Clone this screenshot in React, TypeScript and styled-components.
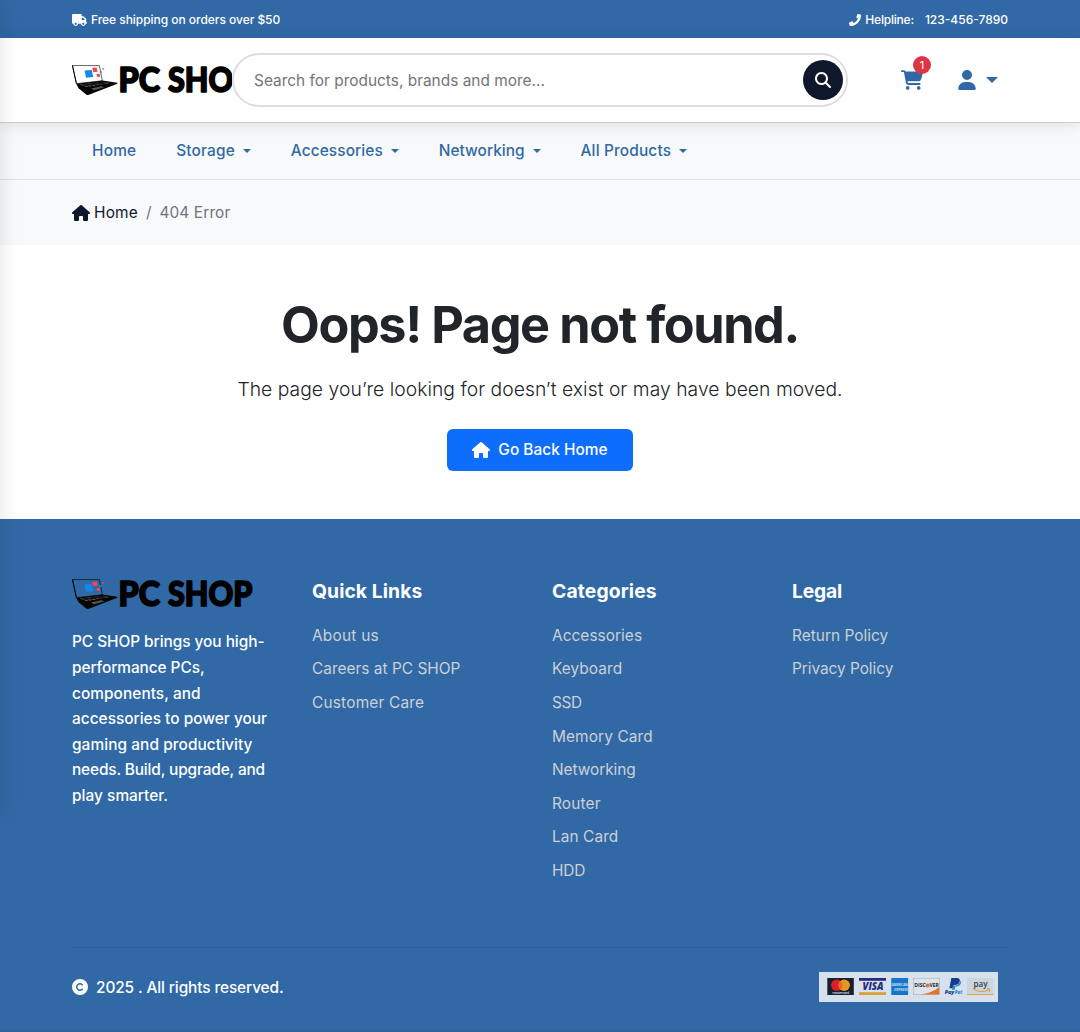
import React from 'react';
import styled, { createGlobalStyle } from 'styled-components';
import { FaTruck, FaHouse, FaCartShopping, FaUser, FaMagnifyingGlass, FaCopyright } from 'react-icons/fa6';
import { FaPhone } from 'react-icons/fa';

const blue = '#3069a5';

const GlobalStyle = createGlobalStyle`
  *, *::before, *::after { box-sizing: border-box; }
  body { margin: 0; background: #fff; color: #212529; font: 400 15.4px/1.6 Inter, 'Liberation Sans', sans-serif; overflow: hidden; }
  h1, h3, p, ul { margin: 0; padding: 0; font-weight: inherit; }
  ul { list-style: none; }
  a { color: inherit; text-decoration: none; }
  svg { display: block; flex: none; }
`;

const Page = styled.div`
  position: relative;
  min-height: 1032px;
  display: flex;
  flex-direction: column;
  overflow: hidden;
`;

const DrawerShade = styled.div`
  position: absolute;
  z-index: 5;
  left: -20px;
  top: 0;
  width: 20px;
  height: 812px;
  box-shadow: 0 0 20px rgba(0, 0, 0, 0.12);
  pointer-events: none;
`;

const BottomShade = styled.div`
  position: absolute;
  z-index: 5;
  left: 0;
  right: 0;
  bottom: -10px;
  height: 10px;
  box-shadow: 0 0 5px rgba(0, 0, 0, 0.15);
`;

const Container = styled.div`
  width: 936px;
  margin: 0 auto;
  display: flex;
  align-items: center;
`;

const Label = styled.span<{ $track?: number }>`
  letter-spacing: ${p => p.$track ?? 0}px;
  white-space: nowrap;
`;

const TopBar = styled.div`
  height: 38px;
  display: flex;
  background: ${blue};
  color: #fff;
  font-size: 12px;
  font-weight: 450;
  padding-top: 1px;
`;

const TopItem = styled.div<{ $gap: number; $push?: boolean }>`
  display: flex;
  align-items: center;
  gap: ${p => p.$gap}px;
  margin-left: ${p => (p.$push ? 'auto' : '0')};
`;

const HelpNumber = styled(Label)`
  margin-left: 7px;
`;

const Header = styled.header`
  position: relative;
  z-index: 2;
  height: 85px;
  display: flex;
  background: #fff;
  border-bottom: 1px solid #c9cdd8;
  box-shadow: 0 2px 15px rgba(0, 0, 0, 0.1);
`;

const LogoFrame = styled.div<{ $width: number; $clip?: boolean }>`
  width: ${p => p.$width}px;
  height: 30px;
  overflow-x: ${p => (p.$clip ? 'clip' : 'visible')};
  overflow-y: visible;
`;

const LogoDrawing = styled.svg`
  overflow: visible;
`;

const SearchBox = styled.form`
  width: 616px;
  height: 54px;
  border: 2px solid #dedede;
  border-radius: 27px;
  display: flex;
  align-items: center;
  justify-content: space-between;
  padding: 0 3px 0 20px;
  color: #757575;
  background: #fff;
`;

const SearchText = styled(Label)`
  padding-top: 2px;
`;

const SearchButton = styled.button`
  width: 40px;
  height: 40px;
  border: 0;
  border-radius: 50%;
  padding: 0;
  display: grid;
  place-items: center;
  background: #0f172a;
  color: #fff;
`;

const Actions = styled.div`
  display: flex;
  align-items: center;
  margin-left: 53px;
  margin-top: -1px;
  color: ${blue};
`;

const Cart = styled.div`
  position: relative;
  margin-right: 34px;
`;

const Badge = styled.span`
  position: absolute;
  left: 12px;
  top: -13px;
  width: 18px;
  height: 18px;
  border-radius: 50%;
  background: #dc3545;
  color: #fff;
  font-size: 11px;
  line-height: 18px;
  text-align: center;
`;

const Caret = styled.i<{ $size: number; $gap: number }>`
  margin-left: ${p => p.$gap}px;
  border: ${p => p.$size}px solid transparent;
  border-top-color: currentColor;
  border-bottom: 0;
`;

const Nav = styled.nav`
  height: 57px;
  display: flex;
  background: #f8f9fb;
  border-bottom: 1px solid #dee2e6;
  color: ${blue};
  font-weight: 480;
`;

const NavItem = styled.a`
  display: flex;
  align-items: center;
  padding: 0 20px;
`;

const Breadcrumb = styled.div`
  height: 65px;
  display: flex;
  background: #f8f9fb;
  color: #6c757d;
  padding-top: 1px;
`;

const CrumbHome = styled.a`
  display: flex;
  align-items: center;
  gap: 4px;
  color: #0f172a;
`;

const Slash = styled.span`
  margin: 0 8px;
`;

const Main = styled.main`
  height: 274px;
  display: flex;
  flex-direction: column;
  align-items: center;
  padding-top: 48px;
`;

const Title = styled.h1`
  font-size: 50.4px;
  font-weight: 650;
  line-height: 64px;
  letter-spacing: -1.42px;
`;

const Lead = styled.p`
  margin-top: 16px;
  font-size: 19.3px;
  font-weight: 300;
  line-height: 32px;
  letter-spacing: 0.04px;
`;

const HomeButton = styled.a`
  margin-top: 24px;
  width: 186px;
  height: 42px;
  border-radius: 6px;
  display: flex;
  align-items: center;
  justify-content: center;
  gap: 8px;
  background: #0d6efd;
  color: #fff;
  font-weight: 450;
`;

const Footer = styled.footer`
  flex: 1;
  background: ${blue};
  color: #fff;
  padding-top: 60px;
`;

const FooterGrid = styled.div`
  width: 936px;
  height: 368px;
  margin: 0 auto;
  display: grid;
  grid-template-columns: repeat(4, 240px);
`;

const About = styled.p`
  margin-top: 20.4px;
  line-height: 25.6px;
  font-weight: 450;
`;

const Line = styled.span<{ $track: number }>`
  display: block;
  white-space: nowrap;
  letter-spacing: ${p => p.$track}px;
`;

const ColumnTitle = styled.h3<{ $track: number }>`
  font-size: 19.3px;
  font-weight: 650;
  line-height: 24px;
  margin-bottom: 19.8px;
  letter-spacing: ${p => p.$track}px;
`;

const FooterLink = styled.li<{ $track: number }>`
  line-height: 25.6px;
  margin-bottom: 8px;
  color: #cdd0d6;
  letter-spacing: ${p => p.$track}px;
`;

const BottomRow = styled.div`
  width: 936px;
  height: 79px;
  margin: 0 auto;
  border-top: 1px solid #2b6196;
  display: flex;
  align-items: center;
  justify-content: space-between;
  padding-right: 10px;
  font-weight: 450;
`;

const Copyright = styled.div`
  display: flex;
  align-items: center;
  gap: 8px;
  padding-top: 1px;
`;

const CopyrightText = styled(Label)`
  padding-top: 1px;
`;

function Logo() {
  const word = { fontFamily: "Lato, 'Open Sans', sans-serif", fontWeight: 900, fontSize: 34.2 };
  return (
    <LogoDrawing width="182" height="30" viewBox="0 0 182 30">
      <path d="M.5.5 27.3.6 30.4 15.8 4.4 18.6Z" fill="none" stroke="#000" strokeWidth=".6" />
      <path d="M.4.4 4.4 18.6" stroke="#000" strokeWidth="1" />
      <path d="M4.2 18.8 30.5 15.6 45.4 17.7V18.7L16.2 30H14.8L6.6 23.2Z" fill="#050505" />
      <path d="M7.5 19.6 29.8 16.9 37.5 18 14.6 21.9Z" fill="#777" />
      <path d="M9 20.2 32 17.2M11.5 20.9 34.5 17.7M10.5 19.2 17 21.5M14.5 18.7 21 20.9M18.5 18.2 25 20.3M22.5 17.8 29 19.6M26.5 17.3 33 18.9" stroke="#050505" strokeWidth=".8" />
      <path d="M19 23.5 29 21.3 32.5 22.3 22 25.2Z" fill="#555" />
      <path d="M12.5 5.5 19.8 4.9 21.2 12 14.1 12.8Z" fill="#1788e8" />
      <path d="M20.2 2.8 24.6 2.5 25.6 6.8 21.3 7.2Z" fill="#ff4053" />
      <path d="M24.5 9 27.6 8.7 28.2 11.8 25.2 12.1Z" fill="#ff4053" />
      <path d="M27.6 6.2 29.5 6 29.8 7.8 28 8Z" fill="#1788e8" />
      <path d="M30.2 3.2 31.7 3 32 4.5 30.5 4.7Z" fill="#ff4053" />
      <g style={word} fill="#000" stroke="#000" strokeWidth="1.7" strokeLinejoin="round">
        <text x="46.5" y="26.6" textLength="41.5" lengthAdjust="spacingAndGlyphs">PC</text>
        <text x="96" y="26.6" textLength="84.5" lengthAdjust="spacingAndGlyphs">SHOP</text>
      </g>
    </LogoDrawing>
  );
}

function Payments() {
  const sans = "'Open Sans', sans-serif";
  return (
    <svg width="179" height="30" viewBox="0 0 179 30" fontFamily={sans}>
      <rect width="179" height="30" fill="#d6e1ed" />
      <rect x="8.3" y="6" width="26.5" height="17" fill="#17202d" />
      <circle cx="17.8" cy="13.2" r="5.7" fill="#dc2027" />
      <circle cx="25.2" cy="13.2" r="5.7" fill="#e6971f" />
      <path d="M21.5 8.9a5.7 5.7 0 0 1 0 8.6 5.7 5.7 0 0 1 0-8.6" fill="#ee6420" />
      <text x="13.2" y="21.8" fontSize="3.6" fontWeight="600" textLength="17" fill="#d6dde4">mastercard</text>
      <rect x="40" y="6" width="27" height="2.8" fill="#292c7d" />
      <rect x="40" y="20.2" width="27" height="2.8" fill="#d7a23a" />
      <text x="43.5" y="18.2" fontSize="10" fontWeight="800" fontStyle="italic" textLength="21" lengthAdjust="spacingAndGlyphs" fill="#292c7d">VISA</text>
      <rect x="72.3" y="6" width="16.8" height="17" fill="#1475ca" />
      <text x="72.7" y="14" fontSize="4.2" fontWeight="800" textLength="16" lengthAdjust="spacingAndGlyphs" fill="#b7d3ee">AMERICAN</text>
      <text x="75.2" y="18.6" fontSize="4.2" fontWeight="800" textLength="13.7" lengthAdjust="spacingAndGlyphs" fill="#b7d3ee">EXPRESS</text>
      <rect x="94.5" y="6.3" width="26" height="16.4" fill="#dce3ea" stroke="#a9b3bd" strokeWidth=".6" />
      <path d="M120.3 15.2V22.5H101.5Q113 20.7 120.3 15.2" fill="#e0752a" />
      <text x="95.3" y="15.3" fontSize="5.2" fontWeight="700" textLength="11.4" lengthAdjust="spacingAndGlyphs" fill="#20252b">DISC</text>
      <circle cx="108.6" cy="13.4" r="2" fill="#e0752a" />
      <text x="110.5" y="15.3" fontSize="5.2" fontWeight="700" textLength="9.3" lengthAdjust="spacingAndGlyphs" fill="#20252b">VER</text>
      <path d="M132.3 6H137.3C140.8 6 141.4 8 140.5 10.2 139.7 12.2 138 12.9 135.8 12.9H134.4L133.7 16.2H130.4Z" fill="#173e86" />
      <path d="M141.2 8.6C142.8 10 142 14.4 137.9 14.4H136.4L135.6 17.8H132.9L133.9 13.5H136.2C139.4 13.4 141 11.4 141.2 8.6" fill="#208bd2" />
      <text x="125.7" y="22.3" fontSize="4.8" fontWeight="800" fontStyle="italic" textLength="9.6" lengthAdjust="spacingAndGlyphs" fill="#173e86">Pay</text>
      <text x="135.7" y="22.3" fontSize="4.8" fontWeight="800" fontStyle="italic" textLength="7.2" lengthAdjust="spacingAndGlyphs" fill="#208bd2">Pal</text>
      <rect x="148" y="6" width="26.5" height="17" fill="#ccd6df" />
      <rect x="148" y="22" width="26.5" height="1" fill="#dfa24a" />
      <text x="154.5" y="15" fontSize="8.4" fontWeight="600" textLength="14" lengthAdjust="spacingAndGlyphs" fill="#343c42">pay</text>
      <path d="M153.7 16.8Q162 21.8 170.2 17.6M168 16.6Q172 15.6 170.2 20" fill="none" stroke="#e29a34" strokeWidth="1" />
    </svg>
  );
}

const navItems: { text: string; track: number; menu: boolean }[] = [
  { text: 'Home', track: 0.2, menu: false },
  { text: 'Storage', track: 0.15, menu: true },
  { text: 'Accessories', track: 0.1, menu: true },
  { text: 'Networking', track: 0.03, menu: true },
  { text: 'All Products', track: 0.16, menu: true },
];

const aboutLines: [string, number][] = [
  ['PC SHOP brings you high-', -0.04],
  ['performance PCs,', -0.06],
  ['components, and', 0.06],
  ['accessories to power your', 0.02],
  ['gaming and productivity', 0.08],
  ['needs. Build, upgrade, and', -0.14],
  ['play smarter.', 0.04],
];

const columns: { title: string; track: number; links: [string, number][] }[] = [
  { title: 'Quick Links', track: 0.08, links: [['About us', 0.25], ['Careers at PC SHOP', 0.03], ['Customer Care', 0.21]] },
  {
    title: 'Categories', track: 0.14,
    links: [['Accessories', 0.05], ['Keyboard', 0.08], ['SSD', -0.4], ['Memory Card', 0.12], ['Networking', -0.04], ['Router', 0.18], ['Lan Card', 0.08], ['HDD', -0.2]],
  },
  { title: 'Legal', track: -0.18, links: [['Return Policy', 0.03], ['Privacy Policy', -0.04]] },
];

export default function App() {
  return (
    <Page>
      <GlobalStyle />
      <TopBar>
        <Container>
          <TopItem $gap={4}>
            <FaTruck width={15} height={12} style={{ width: 15, height: 12 }} />
            <Label $track={-0.04}>Free shipping on orders over $50</Label>
          </TopItem>
          <TopItem $gap={4} $push>
            <FaPhone size={12} />
            <Label $track={-0.2}>Helpline:</Label>
            <HelpNumber $track={0}>123-456-7890</HelpNumber>
          </TopItem>
        </Container>
      </TopBar>
      <Header>
        <Container>
          <LogoFrame $width={160} $clip><Logo /></LogoFrame>
          <SearchBox>
            <SearchText $track={0.02}>Search for products, brands and more...</SearchText>
            <SearchButton type="button"><FaMagnifyingGlass size={16} /></SearchButton>
          </SearchBox>
          <Actions>
            <Cart><FaCartShopping size={22} /><Badge>1</Badge></Cart>
            <FaUser size={20} />
            <Caret $size={6} $gap={9} />
          </Actions>
        </Container>
      </Header>
      <Nav>
        <Container>
          {navItems.map(item => (
            <NavItem key={item.text}>
              <Label $track={item.track}>{item.text}</Label>
              {item.menu && <Caret $size={4} $gap={8} />}
            </NavItem>
          ))}
        </Container>
      </Nav>
      <Breadcrumb>
        <Container>
          <CrumbHome>
            <FaHouse size={18} />
            <Label $track={0.2}>Home</Label>
          </CrumbHome>
          <Slash>/</Slash>
          <Label $track={0.12}>404 Error</Label>
        </Container>
      </Breadcrumb>
      <Main>
        <Title>Oops! Page not found.</Title>
        <Lead>The page you’re looking for doesn’t exist or may have been moved.</Lead>
        <HomeButton>
          <FaHouse size={18} />
          <Label $track={0.04}>Go Back Home</Label>
        </HomeButton>
      </Main>
      <Footer>
        <FooterGrid>
          <div>
            <LogoFrame $width={182}><Logo /></LogoFrame>
            <About>{aboutLines.map(([text, track]) => <Line key={text} $track={track}>{text}</Line>)}</About>
          </div>
          {columns.map(column => (
            <div key={column.title}>
              <ColumnTitle $track={column.track}>{column.title}</ColumnTitle>
              <ul>{column.links.map(([text, track]) => <FooterLink key={text} $track={track}>{text}</FooterLink>)}</ul>
            </div>
          ))}
        </FooterGrid>
        <BottomRow>
          <Copyright>
            <FaCopyright size={16} />
            <CopyrightText $track={-0.1}>2025 . All rights reserved.</CopyrightText>
          </Copyright>
          <Payments />
        </BottomRow>
      </Footer>
      <DrawerShade />
      <BottomShade />
    </Page>
  );
}
